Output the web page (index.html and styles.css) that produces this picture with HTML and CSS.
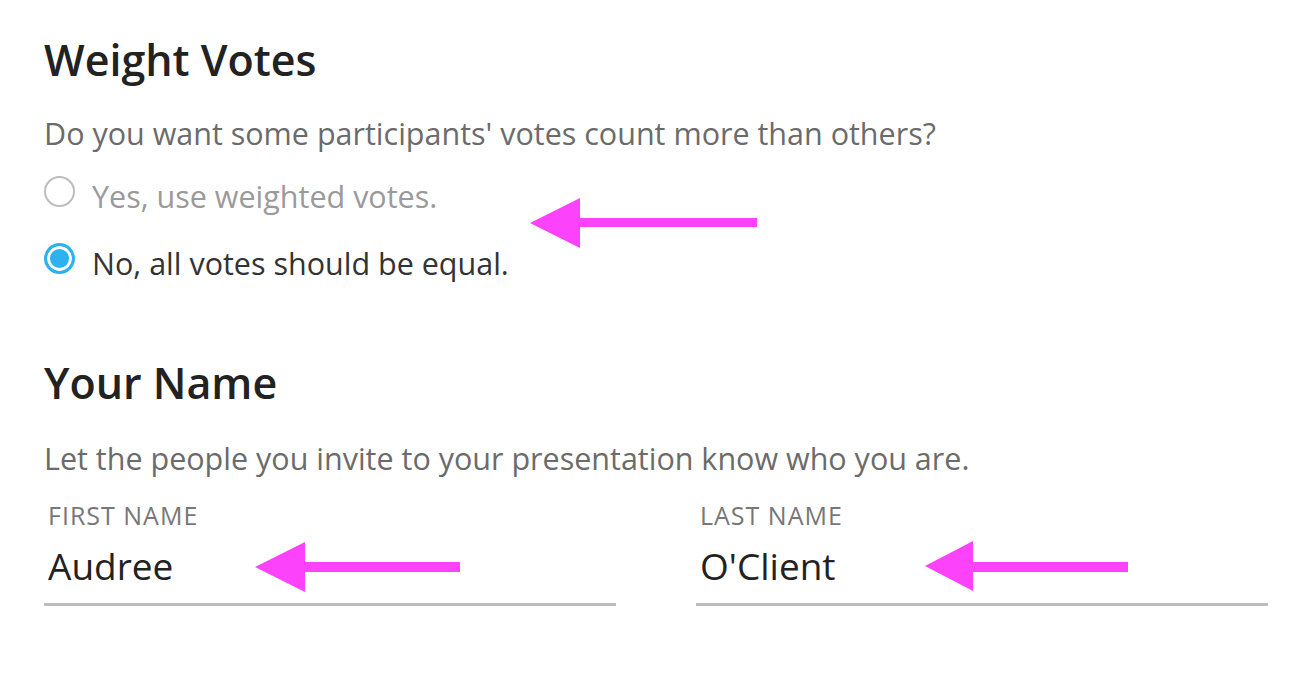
FILE: index.html
```html
<!DOCTYPE html>
<html lang="en">
<head>
  <meta charset="UTF-8">
  <meta name="viewport" content="width=device-width, initial-scale=1.0">
  <title>Presentation Settings</title>
  <link rel="stylesheet" href="styles.css">
</head>
<body>

  <main class="page">
    <section class="section">
      <h2 class="section-title">Weight Votes</h2>
      <p class="section-desc">Do you want some participants' votes count more than others?</p>

      <div class="radio-group">
        <label class="radio radio-disabled">
          <input type="radio" name="weighted" disabled>
          <span class="radio-mark"></span>
          Yes, use weighted votes.
        </label>
        <label class="radio radio-checked">
          <input type="radio" name="weighted" checked>
          <span class="radio-mark"></span>
          No, all votes should be equal.
        </label>
      </div>
    </section>

    <section class="section section-name">
      <h2 class="section-title">Your Name</h2>
      <p class="section-desc">Let the people you invite to your presentation know who you are.</p>

      <div class="name-fields">
        <label class="field">
          <span class="field-label">FIRST NAME</span>
          <input class="field-input" type="text" value="Audree">
        </label>
        <label class="field">
          <span class="field-label">LAST NAME</span>
          <input class="field-input" type="text" value="O'Client">
        </label>
      </div>
    </section>

    <!-- annotation arrows drawn over the form -->
    <svg class="arrow arrow-votes" width="227" height="50" viewBox="0 0 227 50">
      <polygon points="0,25 50,0 50,50" />
      <rect x="48" y="20" width="179" height="9" />
    </svg>
    <svg class="arrow arrow-first" width="205" height="50" viewBox="0 0 205 50">
      <polygon points="0,25 50,0 50,50" />
      <rect x="48" y="20" width="157" height="10" />
    </svg>
    <svg class="arrow arrow-last" width="203" height="50" viewBox="0 0 203 50">
      <polygon points="0,25 48,0 48,50" />
      <rect x="46" y="21" width="157" height="10" />
    </svg>
  </main>

</body>
</html>
```

FILE: styles.css
```css
body {
  margin: 0;
  padding: 0;
  background-color: #ffffff;
  font-family: "Open Sans", "Noto Sans", sans-serif;
  color: #222222;
}

.page {
  position: relative;
  width: 1224px;
  padding: 32px 0 0 44px;
}

.section-title {
  margin: 0;
  font-size: 43px;
  line-height: 56px;
  font-weight: 600;
  color: #222222;
}

.section-desc {
  margin: 25px 0 0;
  font-size: 30.5px;
  line-height: 40px;
  color: #6b6b6b;
}

.radio-group {
  display: flex;
  flex-direction: column;
  gap: 27px;
  margin-top: 23px;
}

.radio {
  display: flex;
  align-items: flex-start;
  gap: 17px;
  font-size: 30.5px;
  line-height: 40px;
  color: #333333;
}

.radio input {
  display: none;
}

.radio-mark {
  box-sizing: border-box;
  width: 31px;
  height: 31px;
  margin-top: 0;
  border-radius: 50%;
  border: 2px solid #bdbdbd;
  background-color: #ffffff;
}

.radio-disabled {
  color: #9a9a9a;
}

.radio-checked .radio-mark {
  border: 3px solid #2bb3f1;
  background-color: #2bb3f1;
  box-shadow: inset 0 0 0 3px #ffffff;
}

.section-name {
  margin-top: 72px;
}

.section-name .section-desc {
  margin-top: 27px;
}

.name-fields {
  display: flex;
  gap: 80px;
  margin-top: 22px;
}

.field {
  display: flex;
  flex-direction: column;
  width: 572px;
  gap: 11px;
}

.field-label {
  padding-left: 4px;
  font-size: 25px;
  line-height: 30px;
  letter-spacing: 1px;
  color: #777777;
}

.field-input {
  box-sizing: border-box;
  width: 100%;
  height: 65px;
  margin: 0;
  padding: 0 0 14px 4px;
  border: none;
  border-bottom: 3px solid #bdbdbd;
  outline: none;
  font-family: inherit;
  font-size: 37px;
  line-height: 48px;
  color: #222222;
  background: transparent;
}

.arrow {
  position: absolute;
  fill: #fd42fb;
}

.arrow-votes {
  left: 530px;
  top: 198px;
}

.arrow-first {
  left: 255px;
  top: 542px;
}

.arrow-last {
  left: 925px;
  top: 541px;
}
```
